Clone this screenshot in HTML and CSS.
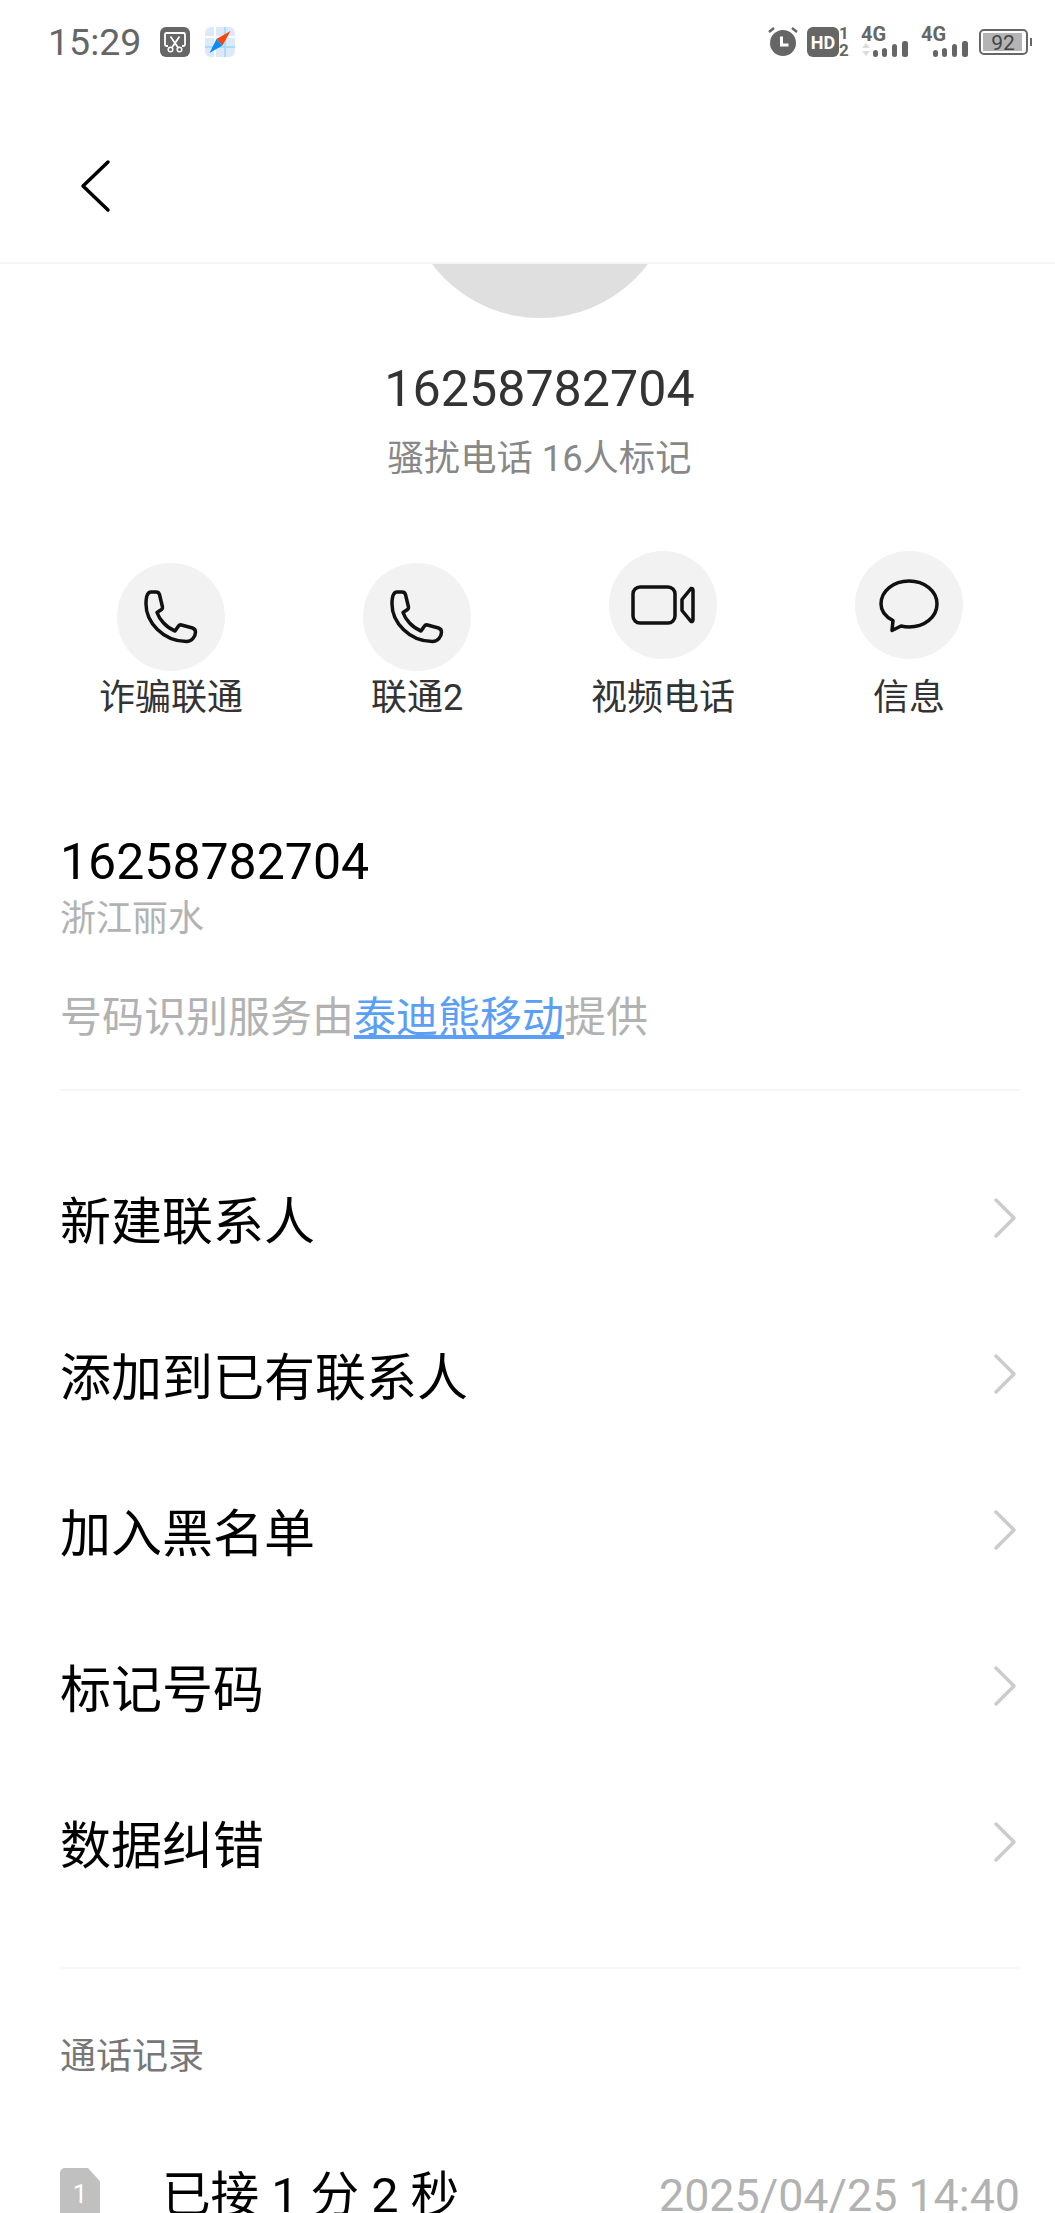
FILE: index.html
```html
<!DOCTYPE html>
<html lang="zh-CN">
<head>
    <meta charset="UTF-8">
    <meta name="viewport" content="width=device-width, initial-scale=1.0">
    <title>16258782704</title>
    <link rel="stylesheet" href="styles.css">
</head>
<body>
    <div class="page">
        <header class="top-bar">
            <div class="status-bar">
                <div class="status-left">
                    <span class="clock">15:29</span>
                    <svg class="app-icon" viewBox="0 0 30 30">
                        <rect width="30" height="30" rx="6" fill="#666"/>
                        <path d="M8 19H6.500Q5 19 5 17.500V7.500Q5 6 6.500 6H23.500Q25 6 25 7.500V17.500Q25 19 23.500 19H22" fill="none" stroke="#fff" stroke-width="1.800"/>
                        <path d="M10.500 9.500L18 20.500M19.500 9.500L12 20.500" fill="none" stroke="#fff" stroke-width="1.800"/>
                        <circle cx="10.500" cy="22.500" r="2.300" fill="none" stroke="#fff" stroke-width="1.500"/>
                        <circle cx="19.500" cy="22.500" r="2.300" fill="none" stroke="#fff" stroke-width="1.500"/>
                    </svg>
                    <svg class="app-icon" viewBox="0 0 30 30">
                        <rect width="30" height="30" rx="6" fill="#dbe9fb"/>
                        <path d="M0 10H30M10 0V30M0 20H30" stroke="#fff" stroke-width="2"/>
                        <path d="M20 0V30M0 20H30" stroke="#a9dcf8" stroke-width="2"/>
                        <path d="M25.500 4L11.500 12L17.500 18.500Z" fill="#f6480c"/>
                        <path d="M4.500 26L11.500 12L17.500 18.500Z" fill="#0a8cf5"/>
                    </svg>
                </div>
                <div class="status-right">
                    <svg class="ic-alarm" viewBox="0 0 28 28">
                        <circle cx="14" cy="15" r="13" fill="#666"/>
                        <path d="M12.500 8.500V17H19.500" fill="none" stroke="#fff" stroke-width="3"/>
                        <path d="M0 4L5 0M28 4L23 0" stroke="#666" stroke-width="2.500"/>
                    </svg>
                    <svg class="ic-hd" viewBox="0 0 42 30">
                        <rect width="32" height="30" rx="6" fill="#666"/>
                        <text x="16" y="21.500" class="hd-text">HD</text>
                        <text x="37" y="12" class="sim-num">1</text>
                        <text x="37" y="29" class="sim-num">2</text>
                    </svg>
                    <svg class="ic-signal" viewBox="0 0 47 30">
                        <text x="0" y="14" class="net-text">4G</text>
                        <path d="M1 21L5 16L9 21Z" fill="#ddd"/>
                        <path d="M1 24L5 29L9 24Z" fill="#ddd"/>
                        <rect x="12" y="23" width="5" height="7" rx="2.500" fill="#666"/>
                        <rect x="21" y="21" width="5" height="9" rx="2.500" fill="#666"/>
                        <rect x="31" y="17" width="5" height="13" rx="2.500" fill="#666"/>
                        <rect x="41" y="14" width="6" height="16" rx="2.500" fill="#666"/>
                    </svg>
                    <svg class="ic-signal" viewBox="0 0 47 30">
                        <text x="0" y="14" class="net-text">4G</text>
                        <rect x="12" y="23" width="5" height="7" rx="2.500" fill="#666"/>
                        <rect x="21" y="21" width="5" height="9" rx="2.500" fill="#666"/>
                        <rect x="31" y="17" width="5" height="13" rx="2.500" fill="#666"/>
                        <rect x="41" y="14" width="6" height="16" rx="2.500" fill="#666"/>
                    </svg>
                    <svg class="ic-battery" viewBox="0 0 53 26">
                        <rect x="1" y="1" width="47" height="24" rx="4" fill="none" stroke="#666" stroke-width="2"/>
                        <rect x="4" y="4" width="39" height="18" fill="#b4b4b4"/>
                        <rect x="51" y="9" width="2" height="8" fill="#666"/>
                        <text x="24" y="20.500" class="batt-text">92</text>
                    </svg>
                </div>
            </div>
            <nav class="nav-row">
                <svg class="back-icon" viewBox="0 0 30 52">
                    <path d="M28 2L3 26L28 50" fill="none" stroke="#000" stroke-width="3.500" stroke-linecap="round" stroke-linejoin="round"/>
                </svg>
            </nav>
        </header>

        <section class="hero">
            <div class="avatar-clip"><div class="avatar"></div></div>
            <h1 class="hero-number">16258782704</h1>
            <p class="hero-tag">骚扰电话 16人标记</p>
        </section>

        <section class="actions">
            <div class="action">
                <div class="action-circle">
                    <svg class="ic-phone" viewBox="0 0 54 54"><path d="M7 2h5q3 0 3.600 3l2.900 12q.3 1.500-1 2.500l-4.500 3c2.500 7 9 15 18 18.500l3.500-5q1-1.500 3-1l11 3q3 1 3 4c0 5-4 9.500-9 9.500C19 51.500 2 32 2 14 2 8 3 2 7 2z"/></svg>
                </div>
                <span class="action-label">诈骗联通</span>
            </div>
            <div class="action">
                <div class="action-circle">
                    <svg class="ic-phone" viewBox="0 0 54 54"><path d="M7 2h5q3 0 3.600 3l2.900 12q.3 1.500-1 2.500l-4.500 3c2.500 7 9 15 18 18.500l3.500-5q1-1.500 3-1l11 3q3 1 3 4c0 5-4 9.500-9 9.500C19 51.500 2 32 2 14 2 8 3 2 7 2z"/></svg>
                </div>
                <span class="action-label">联通2</span>
            </div>
            <div class="action action-raised">
                <div class="action-circle">
                    <svg class="ic-video" viewBox="0 0 64 40">
                        <rect x="2" y="2" width="42" height="36" rx="7"/>
                        <path d="M51 14.500L60 3.500Q62 3 62 5.500V34.500Q62 37 60 36.500L51 25.500Z"/>
                    </svg>
                </div>
                <span class="action-label">视频电话</span>
            </div>
            <div class="action action-raised">
                <div class="action-circle">
                    <svg class="ic-message" viewBox="0 0 60 54"><path d="M14 41.500C6 37.500 2 31.500 2 25 2 12 14.500 2 30 2s28 10 28 23-12.500 23-28 23c-3 0-5.500-.4-8-1l-9 4.500z"/></svg>
                </div>
                <span class="action-label">信息</span>
            </div>
        </section>

        <section class="info">
            <div class="info-number">16258782704</div>
            <div class="info-place">浙江丽水</div>
            <p class="info-source">号码识别服务由<a class="info-link">泰迪熊移动</a>提供</p>
        </section>

        <ul class="menu">
            <li class="menu-row"><span>新建联系人</span><svg class="chevron" viewBox="0 0 22 40"><path d="M2 2L20 20L2 38"/></svg></li>
            <li class="menu-row"><span>添加到已有联系人</span><svg class="chevron" viewBox="0 0 22 40"><path d="M2 2L20 20L2 38"/></svg></li>
            <li class="menu-row"><span>加入黑名单</span><svg class="chevron" viewBox="0 0 22 40"><path d="M2 2L20 20L2 38"/></svg></li>
            <li class="menu-row"><span>标记号码</span><svg class="chevron" viewBox="0 0 22 40"><path d="M2 2L20 20L2 38"/></svg></li>
            <li class="menu-row"><span>数据纠错</span><svg class="chevron" viewBox="0 0 22 40"><path d="M2 2L20 20L2 38"/></svg></li>
        </ul>

        <section class="calls">
            <h2 class="calls-title">通话记录</h2>
            <div class="call-row">
                <div class="sim-badge">1</div>
                <span class="call-text">已接 1 分 2 秒</span>
                <span class="call-date">2025/04/25 14:40</span>
            </div>
        </section>
    </div>
</body>
</html>
```

FILE: styles.css
```css
* {
    box-sizing: border-box;
}

body {
    margin: 0;
    background-color: #fff;
    font-family: Roboto, "Noto Sans CJK SC", sans-serif;
    color: #000;
}

svg {
    overflow: visible;
}

.page {
    height: 2213px;
    overflow: hidden;
}

/* top bar */
.top-bar {
    height: 264px;
    border-bottom: 2px solid #f6f6f6;
}

.status-bar {
    display: flex;
    justify-content: space-between;
    align-items: center;
    height: 84px;
    padding: 0 23px 0 48px;
}

.status-left {
    display: flex;
    align-items: center;
}

.clock {
    width: 112px;
    font-size: 37.500px;
    color: #666;
}

.app-icon {
    width: 30px;
    height: 30px;
    margin-right: 15px;
}

.status-right {
    display: flex;
    align-items: center;
}

.ic-alarm {
    width: 28px;
    height: 28px;
    margin-right: 10px;
}

.ic-hd {
    width: 42px;
    height: 30px;
    margin-right: 12px;
}

.ic-signal {
    width: 47px;
    height: 30px;
    margin-right: 13px;
}

.ic-battery {
    width: 53px;
    height: 26px;
    margin-left: -2px;
}

.hd-text {
    font-size: 18px;
    font-weight: 700;
    fill: #fff;
    text-anchor: middle;
}

.sim-num {
    font-size: 17px;
    font-weight: 700;
    fill: #666;
    text-anchor: middle;
}

.net-text {
    font-size: 20px;
    font-weight: 700;
    fill: #666;
}

.batt-text {
    font-size: 21px;
    fill: #444;
    text-anchor: middle;
}

.nav-row {
    padding: 76px 0 0 80px;
    display: flex;
}

.back-icon {
    width: 30px;
    height: 52px;
}

/* number block */
.hero {
    padding-left: 24px;
    text-align: center;
}

.avatar-clip {
    width: 270px;
    height: 54px;
    margin: 0 auto;
    overflow: hidden;
}

.avatar {
    width: 270px;
    height: 270px;
    margin-top: -216px;
    border-radius: 50%;
    background-color: #dfdfdf;
}

.hero-number {
    margin: 41px 0 0;
    font-size: 50.200px;
    line-height: 60px;
    font-weight: 400;
    color: #333;
}

.hero-tag {
    margin: 18px 0 0;
    font-size: 36.300px;
    line-height: 44px;
    color: #888;
}

.actions {
    display: grid;
    grid-template-columns: repeat(4, 246px);
    align-items: end;
    margin-top: 70px;
    padding-left: 48px;
}

.action {
    display: flex;
    flex-direction: column;
    align-items: center;
}

.action-circle {
    display: flex;
    justify-content: center;
    align-items: center;
    width: 108px;
    height: 108px;
    border-radius: 50%;
    background-color: #f2f2f2;
}

.action-raised .action-circle {
    margin-bottom: 12px;
}

.action-label {
    margin-top: 3px;
    font-size: 36px;
    line-height: 48px;
    color: #333;
}

.ic-phone,
.ic-video,
.ic-message {
    fill: none;
    stroke: #111;
    stroke-width: 3.500;
    stroke-linejoin: round;
}

.ic-phone {
    width: 54px;
    height: 54px;
}

.ic-video {
    width: 64px;
    height: 40px;
}

.ic-message {
    width: 60px;
    height: 54px;
    margin-top: 2px;
}

/* number details */
.info {
    margin: 110px 35px 0 60px;
    padding-bottom: 43px;
    border-bottom: 2px solid #f6f6f6;
}

.info-number {
    font-size: 50px;
    line-height: 60px;
}

.info-place {
    margin-top: 5px;
    font-size: 36px;
    line-height: 44px;
    color: #b2b2b2;
}

.info-source {
    margin: 49px 0 0;
    font-size: 42px;
    line-height: 56px;
    color: #b2b2b2;
}

.info-link {
    color: #5a9ef5;
    text-decoration: underline;
}

/* menu */
.menu {
    list-style: none;
    margin: 0 35px 0 60px;
    padding: 49px 0 47px;
    border-bottom: 2px solid #f6f6f6;
}

.menu-row {
    display: flex;
    justify-content: space-between;
    align-items: center;
    height: 156px;
    font-size: 51px;
}

.chevron {
    width: 22px;
    height: 40px;
    margin-right: 4px;
    fill: none;
    stroke: #ccc;
    stroke-width: 3.500;
    stroke-linecap: round;
    stroke-linejoin: round;
}

/* call log */
.calls {
    margin: 0 35px 0 60px;
}

.calls-title {
    margin: 66px 0 0;
    font-size: 36px;
    line-height: 44px;
    font-weight: 400;
    color: #777;
}

.call-row {
    display: flex;
    align-items: flex-start;
    margin-top: 89px;
}

.sim-badge {
    width: 40px;
    height: 60px;
    padding-top: 11px;
    background-color: #c0c0c0;
    border-radius: 5px;
    clip-path: polygon(0 0, 70% 0, 100% 22%, 100% 100%, 0 100%);
    text-align: center;
    font-size: 26px;
    color: #fff;
}

.call-text {
    margin-left: 62px;
    font-size: 48.600px;
    line-height: 56px;
}

.call-date {
    margin-left: auto;
    font-size: 44.800px;
    line-height: 56px;
    color: #b2b2b2;
}
```
